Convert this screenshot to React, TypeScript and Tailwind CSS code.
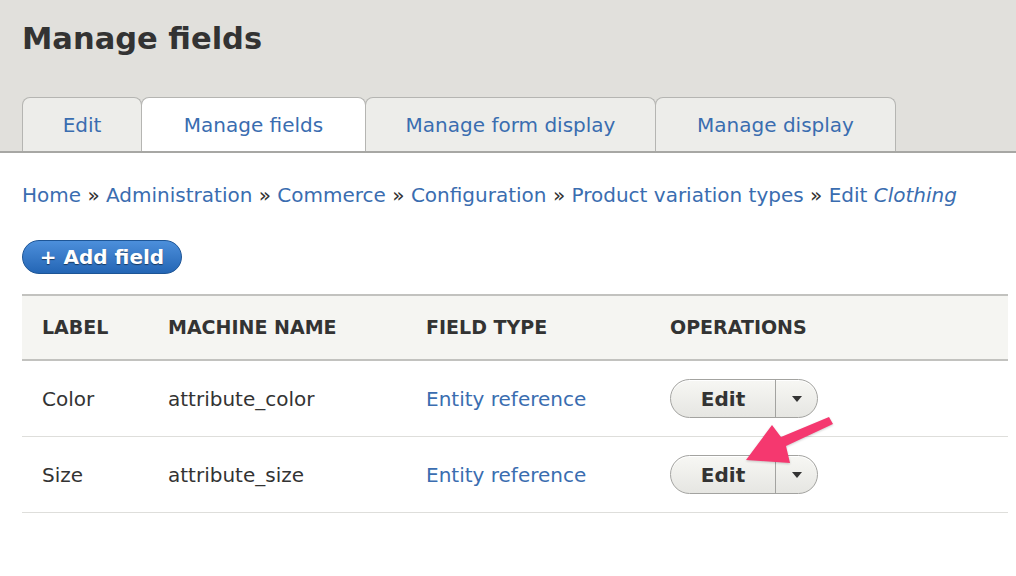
import React from "react";

const tabs = [
  { label: "Edit", w: "w-[120px]", active: false },
  { label: "Manage fields", w: "w-[225px]", active: true },
  { label: "Manage form display", w: "w-[291px]", active: false },
  { label: "Manage display", w: "w-[241px]", active: false },
];

const crumbs = ["Home", "Administration", "Commerce", "Configuration", "Product variation types"];

const rows = [
  { label: "Color", machine: "attribute_color", type: "Entity reference" },
  { label: "Size", machine: "attribute_size", type: "Entity reference" },
];

function DropButton() {
  return (
    <div className="flex h-[39px] w-[148px] rounded-full border border-[#a3a3a0] bg-gradient-to-b from-[#f7f7f4] to-[#e6e6e2] shadow-[inset_0_1px_0_#fff]">
      <span className="flex w-[104px] items-center justify-center text-[20px] font-bold text-[#333]">Edit</span>
      <span className="flex flex-1 items-center justify-center border-l border-[#a3a3a0]">
        <span className="h-0 w-0 border-x-[5px] border-t-[6px] border-x-transparent border-t-[#333]" />
      </span>
    </div>
  );
}

export default function App() {
  return (
    <div className="relative min-h-screen bg-white font-['DejaVu_Sans',sans-serif] text-[#333]">
      {/* Header */}
      <div className="border-b-2 border-[#a7a7a4] bg-[#e1e0dc] px-[22px]">
        <h1 className="pt-[20px] text-[30.5px] font-bold leading-[38px] text-[#333]">Manage fields</h1>
        <div className="mt-[39px] flex">
          {tabs.map((t) => (
            <div
              key={t.label}
              className={`${t.w} -ml-px flex h-[54px] items-center justify-center rounded-t-[8px] border-x border-t border-[#b5b5b2] text-[20px] text-[#3a6db0] first:ml-0 ${
                t.active ? "bg-white" : "bg-[#ededea]"
              }`}
            >
              {t.label}
            </div>
          ))}
        </div>
      </div>

      {/* Breadcrumb */}
      <div className="px-[22px] pt-[28px] text-[20px] leading-[28px] text-[#3a6db0]">
        {crumbs.map((c) => (
          <span key={c}>
            {c} <span className="text-[#333]">»</span>{" "}
          </span>
        ))}
        Edit <em>Clothing</em>
      </div>

      {/* Add field */}
      <div className="px-[22px] pt-[31px]">
        <button className="flex h-[34px] w-[160px] items-center justify-center rounded-full border border-[#1d5596] bg-gradient-to-b from-[#4c8fdb] to-[#2466b5] text-[20px] font-bold text-white [text-shadow:0_1px_1px_rgba(0,0,0,0.5)]">
          + Add field
        </button>
      </div>

      {/* Table */}
      <div className="mx-[22px] mt-[20px] w-[986px]">
        <div className="flex h-[67px] items-center border-y-2 border-[#c2c2bf] bg-[#f5f5f2] text-[19px] font-bold uppercase text-[#333]">
          <span className="w-[146px] pl-[20px]">Label</span>
          <span className="w-[258px]">Machine name</span>
          <span className="w-[244px]">Field type</span>
          <span>Operations</span>
        </div>
        {rows.map((r) => (
          <div key={r.label} className="flex h-[76px] items-center border-b border-[#dededb] text-[20px]">
            <span className="w-[146px] pl-[20px]">{r.label}</span>
            <span className="w-[258px]">{r.machine}</span>
            <span className="w-[244px] text-[#3a6db0]">{r.type}</span>
            <DropButton />
          </div>
        ))}
      </div>

      {/* Annotation arrow */}
      <svg className="absolute left-0 top-0" width="1016" height="576" viewBox="0 0 1016 576">
        <polygon
          points="746,460 772,425 781,437 829,417 833,424 786,446 790,463"
          fill="#f5386f"
          style={{ filter: "drop-shadow(0 1px 1px rgba(0,0,0,0.2))" }}
        />
      </svg>
    </div>
  );
}
